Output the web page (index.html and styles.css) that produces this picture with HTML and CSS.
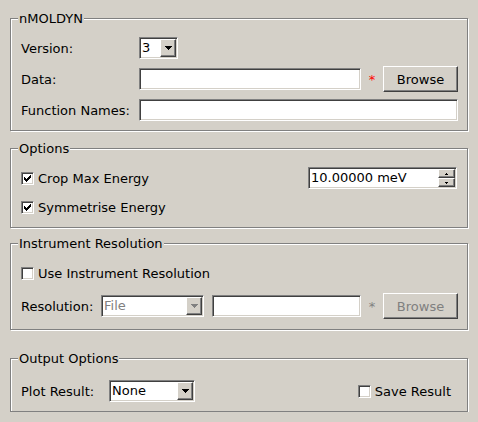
FILE: index.html
```html
<!DOCTYPE html>
<html>
<head>
<meta charset="utf-8">
<title>nMOLDYN</title>
<link rel="stylesheet" href="styles.css">
</head>
<body>
<div class="page">
  <fieldset class="group g-main">
    <legend>nMOLDYN</legend>
    <div class="form-grid">
      <span class="lbl">Version:</span>
      <div class="combo combo-version">
        <span class="combo-text">3</span>
        <span class="combo-btn"><svg width="7" height="4" viewBox="0 0 7 4"><path d="M0 0h7v1h-1v1h-1v1h-1v1h-1v-1h-1v-1h-1v-1h-1z"/></svg></span>
      </div>
      <span class="lbl">Data:</span>
      <div class="file-row">
        <div class="field grow"></div>
        <span class="star">*</span>
        <button class="btn">Browse</button>
      </div>
      <span class="lbl">Function Names:</span>
      <div class="field"></div>
    </div>
  </fieldset>

  <fieldset class="group g-options">
    <legend>Options</legend>
    <div class="rows">
      <div class="row between">
        <label class="chk-item">
          <span class="check"><svg width="9" height="9" viewBox="0 0 9 9"><path d="M1 3h1v3h-1zM2 4h1v3h-1zM3 5h1v3h-1zM4 4h1v3h-1zM5 3h1v3h-1zM6 2h1v3h-1zM7 1h1v3h-1z"/></svg></span>
          <span>Crop Max Energy</span>
        </label>
        <div class="spin">
          <span class="spin-text">10.00000 meV</span>
          <span class="spin-btns">
            <span class="spin-btn"><svg width="3" height="2" viewBox="0 0 3 2"><path d="M1 0h1v1h1v1h-3v-1h1z"/></svg></span>
            <span class="spin-btn"><svg width="3" height="2" viewBox="0 0 3 2"><path d="M0 0h3v1h-1v1h-1v-1h-1z"/></svg></span>
          </span>
        </div>
      </div>
      <div class="row">
        <label class="chk-item">
          <span class="check"><svg width="9" height="9" viewBox="0 0 9 9"><path d="M1 3h1v3h-1zM2 4h1v3h-1zM3 5h1v3h-1zM4 4h1v3h-1zM5 3h1v3h-1zM6 2h1v3h-1zM7 1h1v3h-1z"/></svg></span>
          <span>Symmetrise Energy</span>
        </label>
      </div>
    </div>
  </fieldset>

  <fieldset class="group g-res">
    <legend>Instrument Resolution</legend>
    <div class="rows rows-res">
      <div class="row">
        <label class="chk-item">
          <span class="check"></span>
          <span>Use Instrument Resolution</span>
        </label>
      </div>
      <div class="row tall">
        <span class="lbl lbl-res">Resolution:</span>
        <div class="combo combo-file disabled">
          <span class="combo-text">File</span>
          <span class="combo-btn"><svg width="7" height="4" viewBox="0 0 7 4"><path d="M0 0h7v1h-1v1h-1v1h-1v1h-1v-1h-1v-1h-1v-1h-1z"/></svg></span>
        </div>
        <div class="field field-res"></div>
        <span class="star star-off">*</span>
        <button class="btn" disabled>Browse</button>
      </div>
    </div>
  </fieldset>

  <fieldset class="group g-out">
    <legend>Output Options</legend>
    <div class="row between">
      <div class="plot">
        <span class="lbl lbl-plot">Plot Result:</span>
        <div class="combo combo-plot">
          <span class="combo-text">None</span>
          <span class="combo-btn"><svg width="7" height="4" viewBox="0 0 7 4"><path d="M0 0h7v1h-1v1h-1v1h-1v1h-1v-1h-1v-1h-1v-1h-1z"/></svg></span>
        </div>
      </div>
      <label class="chk-item save">
        <span class="check"></span>
        <span>Save Result</span>
      </label>
    </div>
  </fieldset>
</div>
</body>
</html>
```

FILE: styles.css
```css
* { box-sizing: border-box; }

html, body {
  margin: 0;
  background: #d4d0c8;
}

body {
  font-family: "DejaVu Sans", "Liberation Sans", sans-serif;
  font-size: 13px;
  line-height: 15px;
  color: #000;
}

.page {
  display: flex;
  flex-direction: column;
  padding: 11px 10px 0 10px;
}

/* group boxes */
.group {
  margin: 0;
  min-width: 0;
  border: 1px solid #808080;
  box-shadow: 1px 1px 0 #fff, inset 1px 1px 0 #fff;
  padding: 11px 9px 9px 10px;
}

.group legend {
  padding: 0 1px;
  margin-left: -3px;
  line-height: 15px;
  background: #d4d0c8;
}

.g-options { margin-top: 10px; }
.g-res { margin-top: 8px; padding-bottom: 10px; }
.g-out { margin-top: 21px; padding-top: 14px; padding-bottom: 9px; }

/* form grid in first group */
.form-grid {
  display: grid;
  grid-template-columns: 118px 1fr;
  row-gap: 7px;
  align-items: center;
}

.lbl { white-space: nowrap; }

.file-row {
  display: flex;
  align-items: center;
  height: 26px;
}

.grow { flex: 1; }

.star {
  width: 22px;
  text-align: center;
  color: #f00;
}

.star-off { color: #808080; }

/* sunken field */
.field,
.combo,
.spin,
.check {
  background: #fff;
  border: 1px solid;
  border-color: #808080 #fff #fff #808080;
  box-shadow: inset 1px 1px 0 #404040, inset -1px -1px 0 #d4d0c8;
}

.field { height: 22px; }

/* raised buttons */
.btn,
.combo-btn,
.spin-btn {
  background: #d4d0c8;
  border: 1px solid;
  border-color: #fff #404040 #404040 #fff;
  box-shadow: inset -1px -1px 0 #808080;
}

.btn {
  width: 75px;
  height: 26px;
  padding: 0;
  font: inherit;
  color: #000;
}

.btn:disabled { color: #808080; }

/* combo box */
.combo {
  display: flex;
  height: 22px;
  padding: 1px;
}

.combo-text {
  flex: 1;
  padding-left: 1px;
  line-height: 18px;
  white-space: nowrap;
}

.combo-btn {
  width: 16px;
  display: flex;
  align-items: center;
  justify-content: center;
}

.combo-btn svg { display: block; shape-rendering: crispEdges; fill: #000; }

.combo-version { width: 39px; }
.combo-file { width: 103px; }
.combo-plot { width: 86px; }

.disabled .combo-text { color: #808080; }
.disabled .combo-btn svg { fill: #808080; }

/* rows */
.rows {
  display: flex;
  flex-direction: column;
  gap: 7px;
}

.rows-res { gap: 9px; }

.row {
  display: flex;
  align-items: center;
  height: 22px;
}

.row.tall { height: 26px; }

.between { justify-content: space-between; }

.chk-item {
  display: flex;
  align-items: center;
  gap: 4px;
  white-space: nowrap;
}

.check {
  width: 13px;
  height: 13px;
  padding: 1px;
  display: flex;
}

.check svg { display: block; shape-rendering: crispEdges; fill: #000; }

/* spin box */
.spin {
  width: 149px;
  height: 22px;
  display: flex;
  padding: 1px;
  margin-right: 1px;
}

.spin-text {
  flex: 1;
  line-height: 18px;
  padding-left: 1px;
  white-space: nowrap;
}

.spin-btns {
  width: 17px;
  display: flex;
  flex-direction: column;
}

.spin-btn {
  height: 9px;
  display: flex;
  align-items: center;
  justify-content: center;
}

.spin-btn svg { display: block; shape-rendering: crispEdges; fill: #000; }

/* resolution row */
.lbl-res { width: 80px; }
.field-res { width: 149px; margin-left: 8px; }

/* output row */
.plot {
  display: flex;
  align-items: center;
}

.lbl-plot { width: 88px; }

.save { margin-right: 7px; }
```
